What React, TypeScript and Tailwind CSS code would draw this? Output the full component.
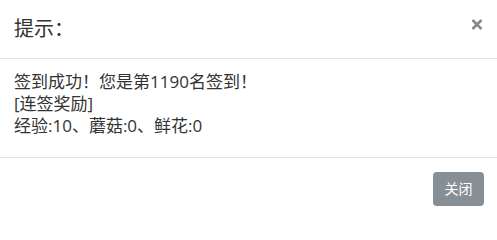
export default function App() {
  return (
    <div
      className="w-[497px] h-[217px] bg-white text-[#333] overflow-hidden"
      style={{ fontFamily: '"Open Sans", "Noto Sans CJK SC", sans-serif' }}
    >
      <div className="flex items-start justify-between h-[59px] border-b border-[#e5e5e5] pl-[14px] pr-[14px] pt-[14px]">
        <h4 className="text-[20px] leading-[30px] font-normal">提示：</h4>
        <button className="mt-[5px] text-[#888]" aria-label="close">
          <svg width="12" height="11" viewBox="0 0 12 11">
            <path d="M1.5 1 L10.5 10 M10.5 1 L1.5 10" stroke="currentColor" strokeWidth="2.6" />
          </svg>
        </button>
      </div>
      <div className="h-[99px] border-b border-[#e5e5e5] pl-[14px] pt-[12px] text-[17px] leading-[22px]">
        <p>签到成功！您是第1190名签到！</p>
        <p>[连签奖励]</p>
        <p>经验:10、蘑菇:0、鲜花:0</p>
      </div>
      <div className="flex justify-end pt-[14px] pr-[13px]">
        <button className="w-[51px] h-[34px] rounded-[4px] bg-[#868e96] text-white text-[14px] leading-[34px]">
          关闭
        </button>
      </div>
    </div>
  );
}
